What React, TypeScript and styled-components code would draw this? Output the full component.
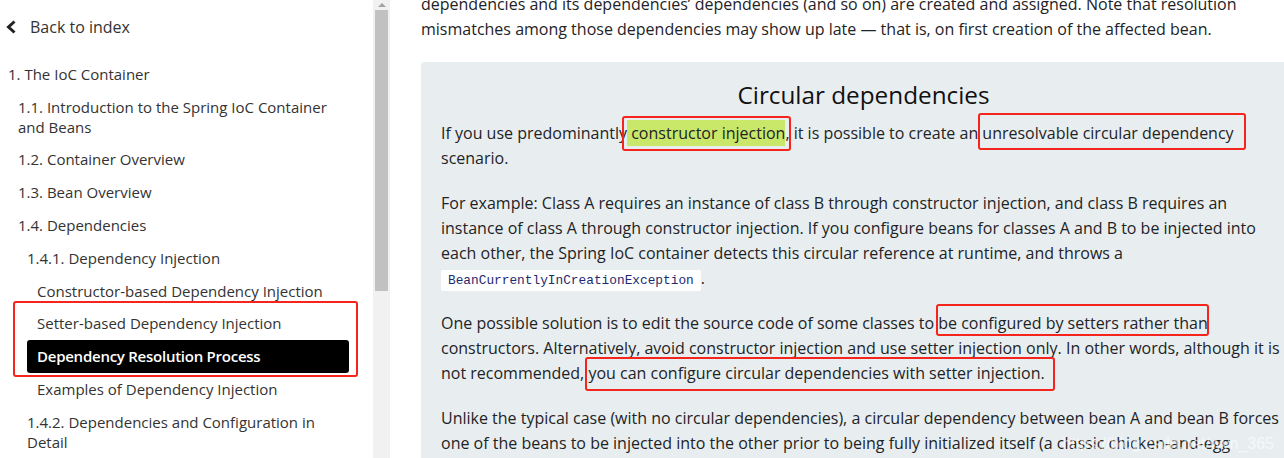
import React from "react";
import styled, { createGlobalStyle } from "styled-components";

const Global = createGlobalStyle`
  html, body { margin: 0; padding: 0; background: #fff; }
  body { width: 1284px; height: 458px; overflow: hidden; font-family: "Open Sans", "Noto Sans", sans-serif; }
  * { box-sizing: border-box; }
`;

const Page = styled.div`
  display: flex;
  width: 1284px;
  height: 458px;
  overflow: hidden;
  position: relative;
`;

const Sidebar = styled.aside`
  width: 373px;
  flex: none;
  padding: 17px 24px 0 0;
  color: #333;
`;

const BackLink = styled.a`
  display: flex;
  align-items: center;
  gap: 14px;
  padding-left: 6px;
  height: 20px;
  font-size: 16px;
  line-height: 20px;
  color: #333;
  text-decoration: none;
  margin-bottom: 20.5px;
`;

const Chevron = styled.svg`
  width: 10px;
  height: 14px;
  flex: none;
`;

const Nav = styled.nav`
  display: flex;
  flex-direction: column;
`;

const indents = [-2, 8, 17, 27];

const Item = styled.div<{ $depth: number; $active?: boolean }>`
  margin-left: ${(p) => indents[p.$depth]}px;
  padding: 6.4px 4px 6.4px 10px;
  font-size: 15px;
  line-height: 20px;
  border-radius: 3px;
  color: ${(p) => (p.$active ? "#fff" : "#333")};
  background: ${(p) => (p.$active ? "#000" : "transparent")};
  font-weight: ${(p) => (p.$active ? 600 : 400)};
  letter-spacing: ${(p) => (p.$active ? "-0.25px" : "0")};
`;

const MarkedGroup = styled.div`
  position: relative;
  &::after {
    content: "";
    position: absolute;
    top: -6px;
    bottom: -4.6px;
    left: 13px;
    right: -9px;
    border: 2px solid #f5241c;
    border-radius: 3px;
    pointer-events: none;
  }
`;

const ScrollTrack = styled.div`
  width: 17px;
  flex: none;
  background: #f1f1f1;
  display: flex;
  flex-direction: column;
  align-items: center;
  padding-top: 3px;
`;

const ScrollArrow = styled.div`
  width: 0;
  height: 0;
  border-left: 4px solid transparent;
  border-right: 4px solid transparent;
  border-bottom: 4px solid #a3a3a3;
`;

const ScrollThumb = styled.div`
  margin-top: 3px;
  width: 13px;
  height: 281px;
  background: #c1c1c1;
`;

const Main = styled.main`
  flex: none;
  width: 885px;
  margin-left: 31px;
  margin-top: -8px;
  color: #1e2326;
  font-size: 16px;
  line-height: 25px;
`;

const Para = styled.p`
  margin: 0 0 20px;
`;

const Sidebarblock = styled.section`
  background: #e8eef0;
  padding: 16px 20px 20px;
  border-radius: 4px;
`;

const Title = styled.h2`
  margin: 0 0 9px;
  text-align: center;
  font-size: 24.3px;
  line-height: 34px;
  font-weight: 400;
  color: #111;
`;

const Code = styled.code`
  font-family: "Liberation Mono", "DejaVu Sans Mono", monospace;
  font-size: 12.8px;
  line-height: 16px;
  color: #1d2a6e;
  background: #fff;
  padding: 3px 7px;
  border-radius: 2px;
`;

const Highlight = styled.span`
  background: #c9e86a;
  padding: 2px 0;
`;

type Inset = { t: number; r: number; b: number; l: number };

const Marked = styled.span<{ $i: Inset }>`
  position: relative;
  &::after {
    content: "";
    position: absolute;
    top: ${(p) => p.$i.t}px;
    right: ${(p) => p.$i.r}px;
    bottom: ${(p) => p.$i.b}px;
    left: ${(p) => p.$i.l}px;
    border: 2px solid #f5241c;
    border-radius: 3px;
    pointer-events: none;
  }
`;

const Watermark = styled.div`
  position: absolute;
  right: 10px;
  bottom: 5px;
  font-family: "Liberation Sans", Arial, sans-serif;
  font-size: 16px;
  color: rgba(255, 255, 255, 0.6);
  pointer-events: none;
`;

export default function App() {
  return (
    <Page>
      <Global />
      <Sidebar>
        <BackLink href="#">
          <Chevron viewBox="0 0 10 14">
            <polyline
              points="8.5,1.5 2.5,7 8.5,12.5"
              fill="none"
              stroke="#222"
              strokeWidth="3"
              strokeLinejoin="miter"
            />
          </Chevron>
          Back to index
        </BackLink>
        <Nav>
          <Item $depth={0}>1. The IoC Container</Item>
          <Item $depth={1}>1.1. Introduction to the Spring IoC Container and Beans</Item>
          <Item $depth={1}>1.2. Container Overview</Item>
          <Item $depth={1}>1.3. Bean Overview</Item>
          <Item $depth={1}>1.4. Dependencies</Item>
          <Item $depth={2}>1.4.1. Dependency Injection</Item>
          <Item $depth={3}>Constructor-based Dependency Injection</Item>
          <MarkedGroup>
            <Item $depth={3}>Setter-based Dependency Injection</Item>
            <Item $depth={3} $active>
              Dependency Resolution Process
            </Item>
          </MarkedGroup>
          <Item $depth={3}>Examples of Dependency Injection</Item>
          <Item $depth={2}>1.4.2. Dependencies and Configuration in Detail</Item>
        </Nav>
      </Sidebar>
      <ScrollTrack>
        <ScrollArrow />
        <ScrollThumb />
      </ScrollTrack>
      <Main>
        <Para>
          dependencies and its dependencies’ dependencies (and so on) are created and assigned. Note that
          resolution mismatches among those dependencies may show up late — that is, on first creation of the
          affected bean.
        </Para>
        <Sidebarblock>
          <Title>Circular dependencies</Title>
          <Para>
            If you use predominantly
            <Marked $i={{ t: -6, r: -1, b: -6.5, l: -5 }}>
              <Highlight> constructor injection</Highlight>,
            </Marked>{" "}
            it is possible to create an{" "}
            <Marked $i={{ t: -9, r: -12, b: -6, l: -4 }}>unresolvable circular dependency</Marked> scenario.
          </Para>
          <Para>
            For example: Class A requires an instance of class B through constructor injection, and class B
            requires an instance of class A through constructor injection. If you configure beans for classes A
            and B to be injected into each other, the Spring IoC container detects this circular reference at
            runtime, and throws a <Code>BeanCurrentlyInCreationException</Code>.
          </Para>
          <Para>
            One possible solution is to edit the source code of some classes to{" "}
            <Marked $i={{ t: -8, r: -1, b: -1.5, l: -2 }}>be configured by setters rather than</Marked>{" "}
            constructors. Alternatively, avoid constructor injection and use setter injection only. In other
            words, although it is not recommended,{" "}
            <Marked $i={{ t: -5, r: -10, b: -7, l: -3 }}>
              you can configure circular dependencies with setter injection.
            </Marked>
          </Para>
          <Para>
            Unlike the typical case (with no circular dependencies), a circular dependency between bean A and
            bean B forces one of the beans to be injected into the other prior to being fully initialized itself
            (a classic chicken-and-egg scenario).
          </Para>
        </Sidebarblock>
      </Main>
      <Watermark>https://blog.csdn.net/wyn_365</Watermark>
    </Page>
  );
}
